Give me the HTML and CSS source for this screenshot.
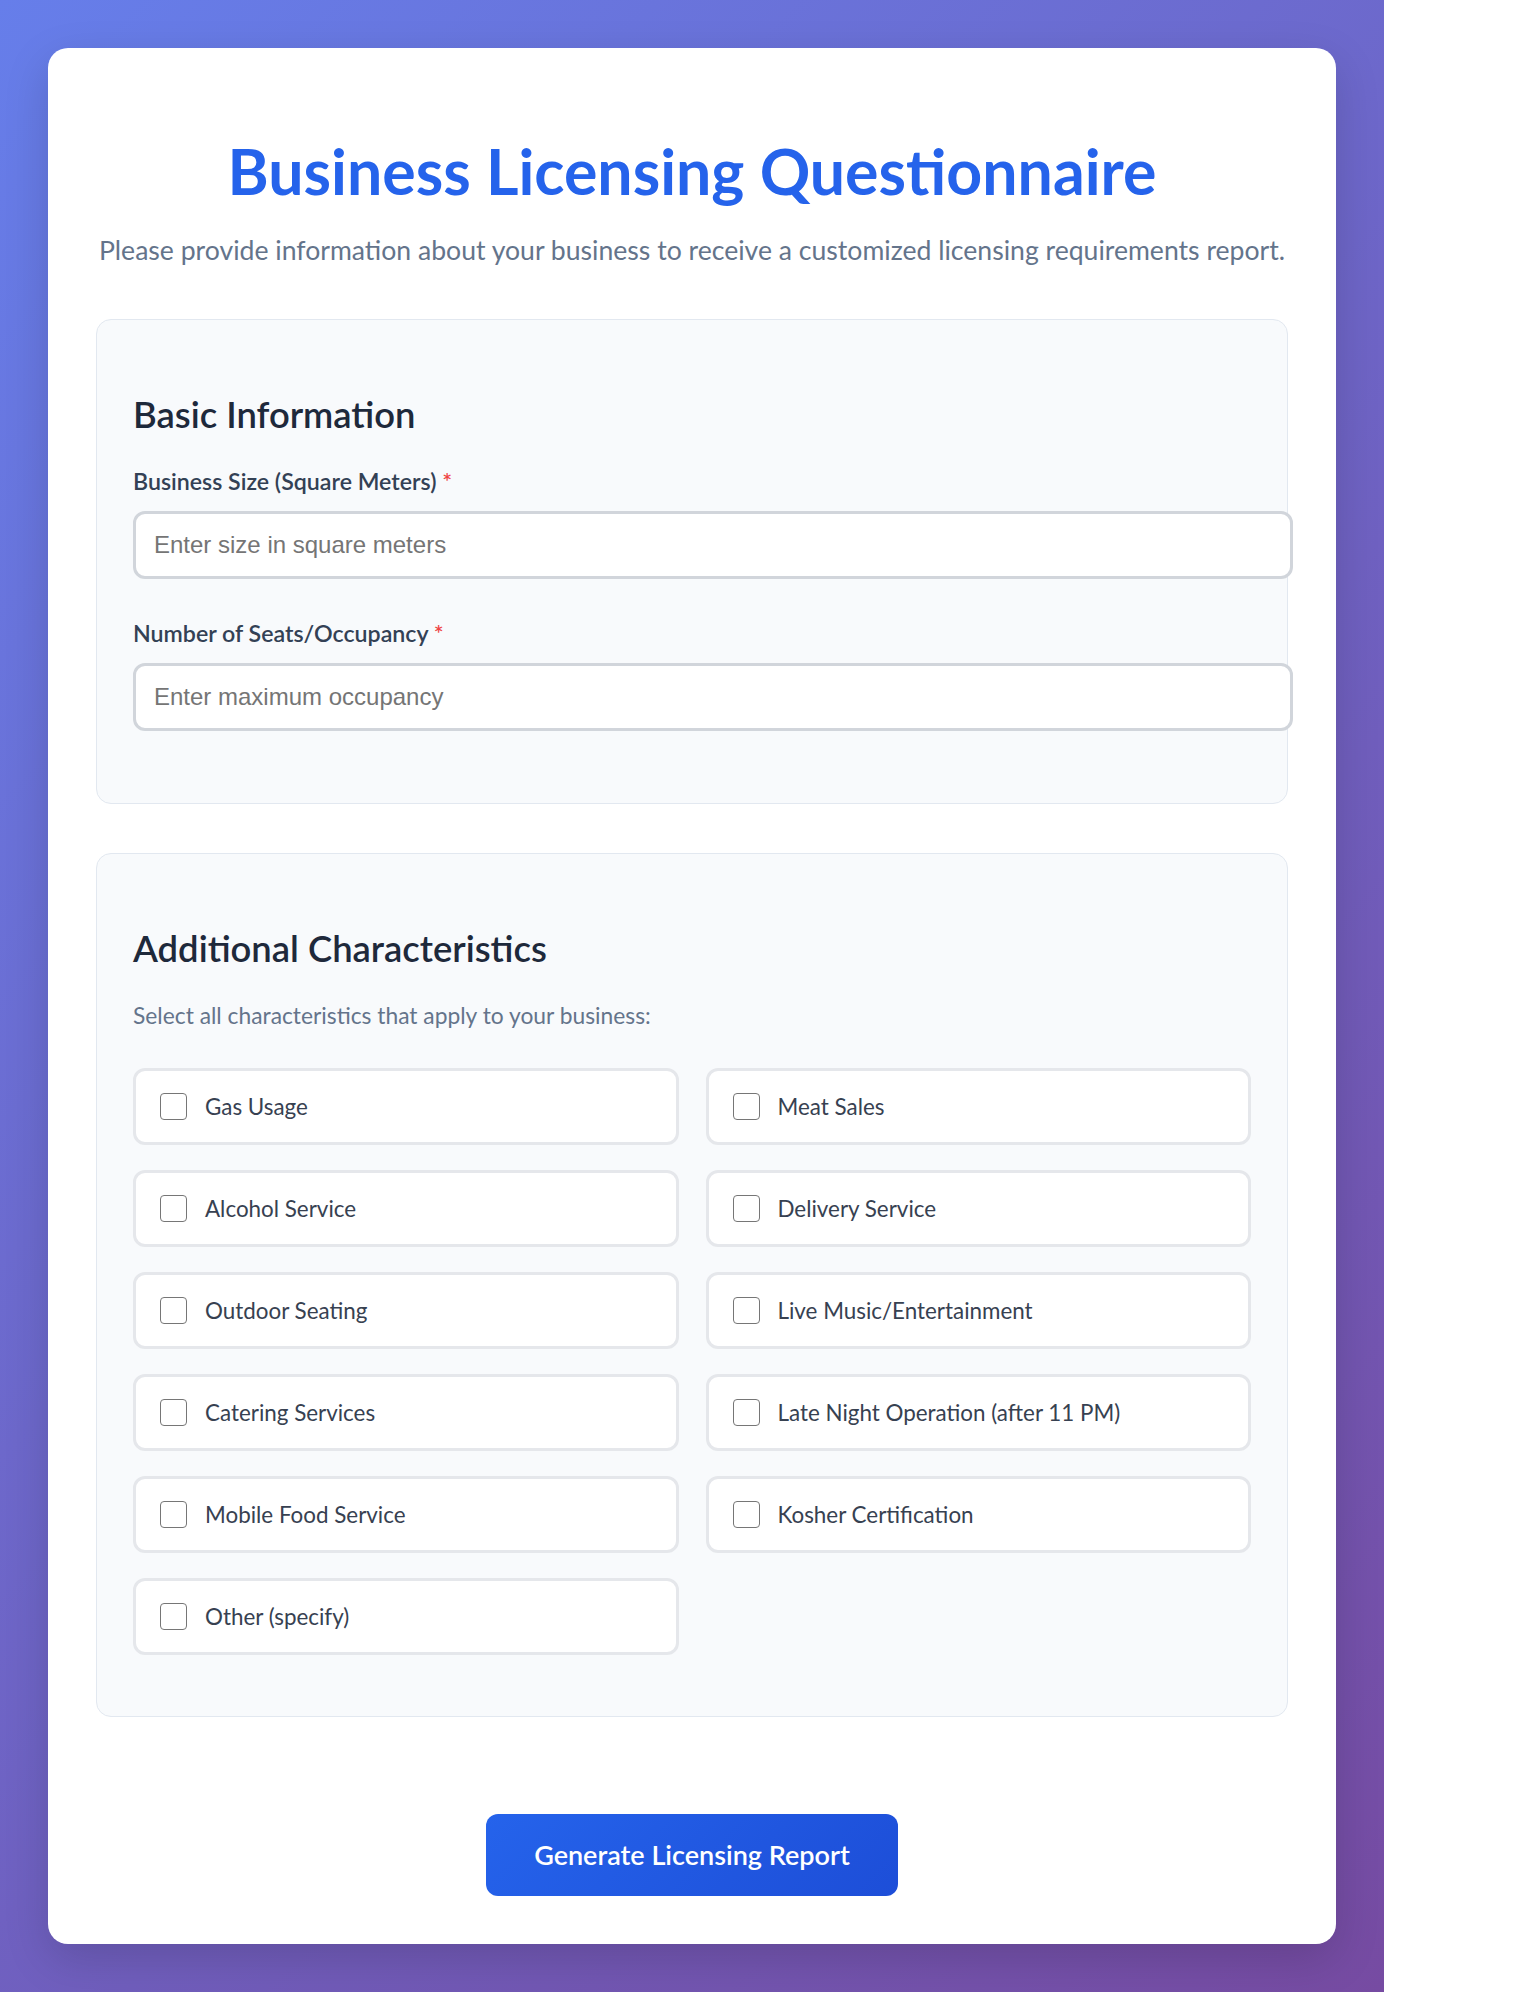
FILE: index.html
```html
<!DOCTYPE html>
<html lang="en">
<head>
<meta charset="utf-8">
<title>Business Licensing Questionnaire</title>
<link rel="stylesheet" href="styles.css">
</head>
<body>
<div class="page">
  <main class="card">
    <h1 class="title">Business Licensing Questionnaire</h1>
    <p class="subtitle">Please provide information about your business to receive a customized licensing requirements report.</p>

    <form class="form">
      <section class="section section-basic">
        <h2 class="section-title">Basic Information</h2>
        <div class="form-group">
          <label class="field-label" for="size">Business Size (Square Meters) <span class="req">*</span></label>
          <input class="text-input" id="size" type="number" placeholder="Enter size in square meters">
        </div>
        <div class="form-group">
          <label class="field-label" for="seats">Number of Seats/Occupancy <span class="req">*</span></label>
          <input class="text-input" id="seats" type="number" placeholder="Enter maximum occupancy">
        </div>
      </section>

      <section class="section section-extra">
        <h2 class="section-title">Additional Characteristics</h2>
        <p class="hint">Select all characteristics that apply to your business:</p>
        <div class="check-grid">
          <label class="check-item"><input class="check" type="checkbox"><span>Gas Usage</span></label>
          <label class="check-item"><input class="check" type="checkbox"><span>Meat Sales</span></label>
          <label class="check-item"><input class="check" type="checkbox"><span>Alcohol Service</span></label>
          <label class="check-item"><input class="check" type="checkbox"><span>Delivery Service</span></label>
          <label class="check-item"><input class="check" type="checkbox"><span>Outdoor Seating</span></label>
          <label class="check-item"><input class="check" type="checkbox"><span>Live Music/Entertainment</span></label>
          <label class="check-item"><input class="check" type="checkbox"><span>Catering Services</span></label>
          <label class="check-item"><input class="check" type="checkbox"><span>Late Night Operation (after 11 PM)</span></label>
          <label class="check-item"><input class="check" type="checkbox"><span>Mobile Food Service</span></label>
          <label class="check-item"><input class="check" type="checkbox"><span>Kosher Certification</span></label>
          <label class="check-item"><input class="check" type="checkbox"><span>Other (specify)</span></label>
        </div>
      </section>

      <div class="actions">
        <button class="submit" type="button">Generate Licensing Report</button>
      </div>
    </form>
  </main>
</div>
</body>
</html>
```

FILE: styles.css
```css
html, body {
  margin: 0;
  padding: 0;
  background: #ffffff;
}

body {
  font-family: Lato, "Noto Sans", sans-serif;
  color: #1e293b;
}

.page {
  width: 1384px;
  min-height: 1992px;
  box-sizing: border-box;
  padding: 48px;
  background: linear-gradient(135deg, #667eea 0%, #764ba2 100%);
}

.card {
  background: #ffffff;
  border-radius: 20px;
  padding: 48px;
  box-shadow: 0 15px 45px rgba(0, 0, 0, 0.15);
}

.title {
  margin: 37px 0 0;
  font-size: 62.6px;
  line-height: 75px;
  font-weight: 700;
  color: #2563eb;
  text-align: center;
}

.subtitle {
  margin: 24px 0 0;
  font-size: 26.6px;
  line-height: 36px;
  color: #64748b;
  text-align: center;
  white-space: nowrap;
}

.form {
  margin-top: 51px;
}

.section {
  background: #f8fafc;
  border: 1px solid #e2e8f0;
  border-radius: 15px;
  padding: 36px 36px 33px;
}

.section-extra {
  margin-top: 49px;
}

.section-title {
  margin: 34px 0 0;
  font-size: 36.4px;
  line-height: 48px;
  font-weight: 600;
  color: #1e293b;
}

.form-group {
  margin-top: 28px;
}

.form-group + .form-group {
  margin-top: 39px;
}

.form-group:last-child {
  margin-bottom: 39px;
}

.field-label {
  display: block;
  font-size: 23.2px;
  line-height: 30px;
  font-weight: 600;
  color: #334155;
  margin-bottom: 15px;
}

.req {
  color: #ef4444;
}

.text-input {
  display: block;
  width: 100%;
  box-sizing: content-box;
  margin: 0;
  padding: 18px;
  border: 3px solid #d1d5db;
  border-radius: 12px;
  background: #ffffff;
  font-family: "Liberation Sans", Arial, sans-serif;
  font-size: 24px;
  line-height: 26px;
  height: 26px;
  color: #111827;
  outline: none;
  -moz-appearance: textfield;
}

.text-input::-webkit-outer-spin-button,
.text-input::-webkit-inner-spin-button {
  -webkit-appearance: none;
  margin: 0;
}

.text-input::placeholder {
  color: #757575;
}

.hint {
  margin: 28px 0 0;
  font-size: 22.8px;
  line-height: 30px;
  color: #64748b;
}

.check-grid {
  display: grid;
  grid-template-columns: 1fr 1fr;
  column-gap: 27px;
  row-gap: 25px;
  margin-top: 38px;
  margin-bottom: 28px;
}

.check-item {
  display: flex;
  align-items: center;
  gap: 18px;
  height: 77px;
  box-sizing: border-box;
  padding: 0 24px;
  background: #ffffff;
  border: 3px solid #e5e7eb;
  border-radius: 12px;
  font-size: 22.4px;
  color: #374151;
  cursor: pointer;
}

.check {
  -webkit-appearance: none;
  appearance: none;
  flex: none;
  width: 27px;
  height: 27px;
  margin: 0;
  box-sizing: border-box;
  border: 1.5px solid #767676;
  border-radius: 4px;
  background: #ffffff;
}

.actions {
  display: flex;
  justify-content: center;
  margin-top: 97px;
}

.submit {
  font-family: Lato, "Noto Sans", sans-serif;
  font-size: 27px;
  line-height: 36px;
  font-weight: 600;
  color: #ffffff;
  padding: 23px 48px;
  border: none;
  border-radius: 12px;
  background: linear-gradient(135deg, #2563eb 0%, #1d4ed8 100%);
  cursor: pointer;
}
```
